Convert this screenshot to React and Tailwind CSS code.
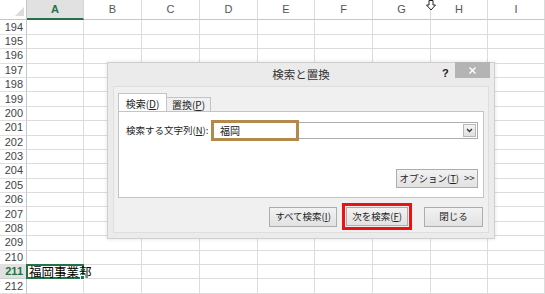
import React from "react";

const cols = ["A", "B", "C", "D", "E", "F", "G", "H", "I"];
const rows = Array.from({ length: 19 }, (_, i) => 194 + i);
const FONT = { fontFamily: '"Noto Sans CJK JP", "Noto Sans", sans-serif' };

function Btn({ children, className = "" }) {
  return (
    <div
      className={
        "flex items-center justify-center whitespace-nowrap border border-[#adadad] bg-gradient-to-b from-[#f2f2f2] to-[#e2e2e2] text-[9.5px] text-[#1e1e1e] " +
        className
      }
    >
      {children}
    </div>
  );
}

export default function App() {
  return (
    <div
      className="relative h-[294px] w-[545px] overflow-hidden bg-white"
      style={FONT}
    >
      {/* grid */}
      <div className="grid grid-cols-[27px_57px_58px_58px_58px_57px_58px_58px_57px_57px]">
        {/* header row */}
        <div className="relative h-[20.4px] border-b border-r border-[#c6c6c6] bg-white">
          <svg className="absolute bottom-[3px] right-[2px]" width="9" height="9" viewBox="0 0 9 9">
            <polygon points="9,0 9,9 0,9" fill="#dcdcdc" />
          </svg>
        </div>
        {cols.map((c) =>
          c === "A" ? (
            <div
              key={c}
              className="flex h-[20.4px] items-center justify-center border-b-2 border-r border-b-[#217346] border-r-[#d4d4d4] bg-[#e1e1e1] text-[11px] font-bold text-[#217346]"
              style={{ fontFamily: '"Liberation Sans", sans-serif' }}
            >
              {c}
            </div>
          ) : (
            <div
              key={c}
              className="flex h-[20.4px] items-center justify-center border-b border-r border-b-[#c6c6c6] border-r-[#dadada] bg-white text-[11px] text-[#555]"
              style={{ fontFamily: '"Liberation Sans", sans-serif' }}
            >
              {c}
            </div>
          )
        )}
        {rows.map((r) => (
          <React.Fragment key={r}>
            <div
              className={
                "flex h-[14.4px] items-center justify-end border-b border-r pr-[3px] text-[11px] leading-none " +
                (r === 211
                  ? "border-b-[#cfcfcf] border-r-[#217346] bg-[#e1e1e1] font-bold text-[#217346]"
                  : "border-b-[#e1e1e1] border-r-[#c6c6c6] text-[#444]")
              }
              style={{ fontFamily: '"Liberation Sans", sans-serif' }}
            >
              {r}
            </div>
            {cols.map((c) => (
              <div
                key={c}
                className="relative h-[14.4px] border-b border-r border-[#dcdcdc]"
              >
                {r === 211 && c === "A" && (
                  <div className="absolute -left-[1px] -top-[1px] z-10 h-[15.4px] w-[58px] border-2 border-[#217346]">
                    <span className="absolute left-[1px] top-[-3px] whitespace-nowrap text-[12.5px] text-black">
                      福岡事業部
                    </span>
                    <div className="absolute -bottom-[3px] -right-[3px] h-[5px] w-[5px] border border-white bg-[#217346]" />
                  </div>
                )}
              </div>
            ))}
          </React.Fragment>
        ))}
      </div>

      {/* cursor */}
      <svg
        className="absolute left-[426px] top-0"
        width="10"
        height="11"
        viewBox="0 0 10 11"
      >
        <path
          d="M3 0.5 H7 V5 H9.5 L5 10 L0.5 5 H3 Z"
          fill="white"
          stroke="#222"
          strokeWidth="1"
        />
      </svg>

      {/* dialog */}
      <div className="absolute left-[107px] top-[62px] flex h-[177px] w-[388px] flex-col border border-[#cfcfcf] bg-[#ebebeb] shadow-[0_0_4px_rgba(0,0,0,0.12)]">
        <div className="relative flex h-[23px] shrink-0 items-center justify-center">
          <span className="text-[11.5px] text-[#333]">検索と置換</span>
          <span
            className="absolute left-[334px] top-[2px] text-[11px] font-bold text-[#222]"
            style={{ fontFamily: '"Liberation Sans", sans-serif' }}
          >
            ?
          </span>
          <div className="absolute right-[4px] top-[-1px] flex h-[16px] w-[35px] items-center justify-center bg-[#b4b4b4]">
            <svg width="7" height="7" viewBox="0 0 7 7">
              <path d="M0.5 0.5 L6.5 6.5 M6.5 0.5 L0.5 6.5" stroke="white" strokeWidth="1.4" />
            </svg>
          </div>
        </div>
        <div className="mx-[5px] mb-[5px] flex flex-1 flex-col border border-[#dedede] bg-[#f0f0f0] pl-[4px] pr-[5px] pt-[7px]">
          {/* tabs */}
          <div className="flex h-[17px] items-end">
            <div className="relative z-10 flex h-[18px] w-[49px] items-center justify-center whitespace-nowrap border border-b-0 border-[#c4c4c4] bg-white pt-[2px] text-[10px] text-[#222]">
              検索(<u>D</u>)
            </div>
            <div className="flex h-[14px] w-[44px] items-center justify-center whitespace-nowrap border border-b-0 border-l-0 border-[#c4c4c4] bg-[#f0f0f0] text-[10px] text-[#222]">
              置換(<u>P</u>)
            </div>
          </div>
          {/* panel */}
          <div className="relative flex h-[87px] w-[366px] flex-col border border-[#c4c4c4] bg-white">
            <div className="mt-[10px] flex items-center">
              <span className="ml-[7px] w-[85px] whitespace-nowrap text-[9.5px] text-[#222]">
                検索する文字列(<u>N</u>):
              </span>
              <div className="relative flex h-[17px] w-[267px] items-center border border-[#abadb3] bg-white">
                <span className="pl-[8px] text-[10px] text-[#111]">福岡</span>
                <div className="absolute right-[1px] top-[1px] flex h-[13px] w-[13px] items-center justify-center border border-[#b8b8b8] bg-gradient-to-b from-[#f4f4f4] to-[#e0e0e0]">
                  <svg width="7" height="5" viewBox="0 0 7 5">
                    <path d="M1 1 L3.5 3.5 L6 1" fill="none" stroke="#333" strokeWidth="1.3" />
                  </svg>
                </div>
                <div className="absolute -left-[1px] -top-[3px] h-[21px] w-[88px] border-[3px] border-[#b48a4c]" />
              </div>
            </div>
            <div className="mt-[30px] flex justify-end pr-[5px]">
              <Btn className="h-[19px] w-[82px]">
                オプション(<u>T</u>)<span className="ml-[5px]">&gt;&gt;</span>
              </Btn>
            </div>
          </div>
          {/* buttons */}
          <div className="mt-[5px] flex items-center justify-end">
            <Btn className="h-[20px] w-[68px]">
              すべて検索(<u>I</u>)
            </Btn>
            <div className="ml-[5px] border-[3px] border-[#ee1111] p-[1px]">
              <Btn className="h-[19px] w-[62px] border-[#4a9ad6]">
                次を検索(<u>F</u>)
              </Btn>
            </div>
            <Btn className="ml-[12px] h-[20px] w-[59px]">閉じる</Btn>
          </div>
        </div>
      </div>
    </div>
  );
}
